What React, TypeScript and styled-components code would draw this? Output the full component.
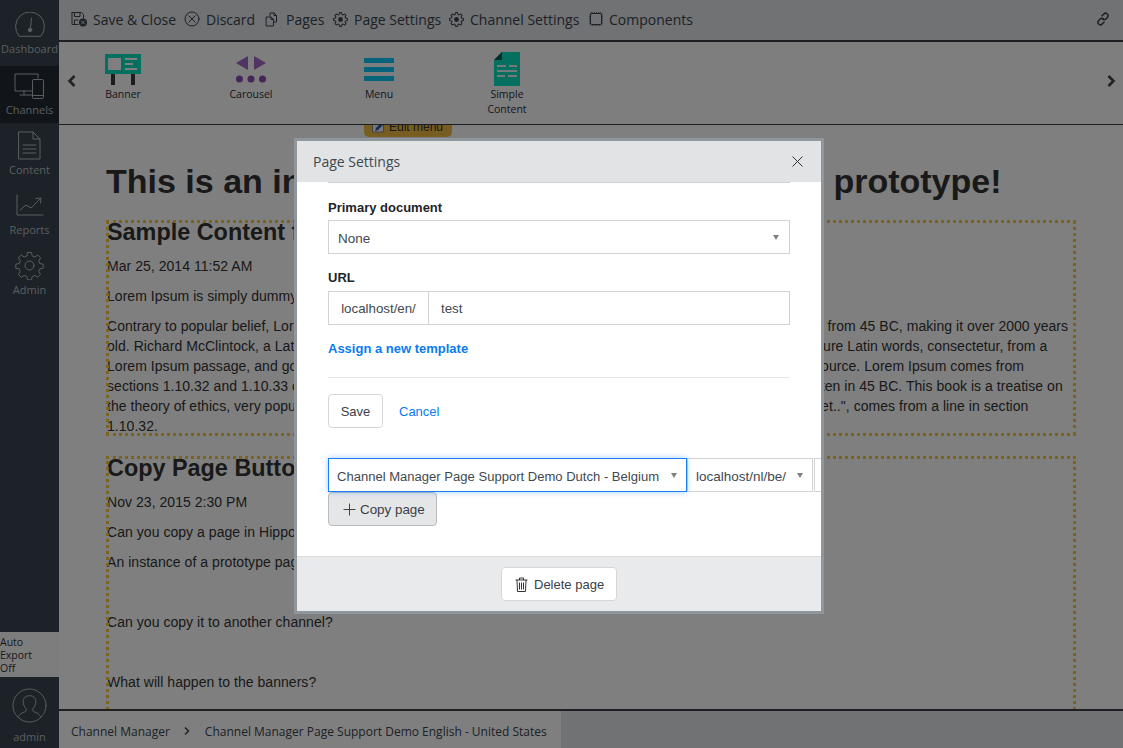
import React from "react";
import styled, { createGlobalStyle } from "styled-components";

const Global = createGlobalStyle`
  html, body { margin: 0; padding: 0; height: 100%; overflow: hidden; background: #fff; }
  body { font-family: "Liberation Sans", Arial, sans-serif; font-size: 14px; color: #333; }
  * { box-sizing: border-box; }
`;

const Shell = styled.div`
  display: flex;
  width: 1123px;
  height: 748px;
  overflow: hidden;
`;

const Sidebar = styled.nav`
  width: 59px;
  flex: none;
  background: #38454e;
  display: flex;
  flex-direction: column;
  font-family: "Open Sans", sans-serif;
  font-size: 11px;
  color: #b4bcc2;
`;

const NavItem = styled.div<{ $active?: boolean; $h: number; $top: number; $bottom: number }>`
  height: ${(p) => p.$h}px;
  flex: none;
  background: ${(p) => (p.$active ? "#222b35" : "transparent")};
  display: flex;
  flex-direction: column;
  align-items: center;
  padding: ${(p) => p.$top}px 0 ${(p) => p.$bottom}px;
  line-height: 15px;
`;

const NavIcon = styled.div`
  flex: 1;
  min-height: 0;
  display: flex;
  align-items: center;
  justify-content: center;
`;

const Spacer = styled.div`
  flex: 1;
`;

const AutoExport = styled.div`
  height: 45px;
  flex: none;
  background: #fafafa;
  color: #333;
  line-height: 13px;
  padding-top: 4px;
  font-size: 10.5px;
`;

const UserBox = styled.div`
  height: 71px;
  flex: none;
  display: flex;
  flex-direction: column;
  align-items: center;
  padding-top: 11px;
  gap: 6px;
  font-size: 11px;
  line-height: 16px;
`;

const Main = styled.div`
  flex: 1;
  min-width: 0;
  display: flex;
  flex-direction: column;
`;

const Toolbar = styled.div`
  height: 42px;
  flex: none;
  background: #e1e4e8;
  border-bottom: 2px solid #3a3f45;
  display: flex;
  align-items: center;
  padding: 0 12px 2px;
  font-family: "Open Sans", sans-serif;
  font-size: 14px;
  color: #39434c;
`;

const ToolItem = styled.span<{ $w: number }>`
  display: inline-flex;
  align-items: center;
  gap: 6px;
  width: ${(p) => p.$w}px;
  flex: none;
  white-space: nowrap;
  svg { flex: none; }
`;

const LinkIcon = styled.span`
  margin-left: auto;
  margin-right: 1px;
  display: flex;
`;

const Palette = styled.div`
  height: 83px;
  flex: none;
  background: #fcfcfc;
  border-bottom: 1px solid #3a3f45;
  display: flex;
  align-items: flex-start;
  position: relative;
  z-index: 2;
  color: #2e2e3a;
`;

const Chevron = styled.div<{ $side: "l" | "r" }>`
  width: 24px;
  height: 100%;
  flex: none;
  display: flex;
  align-items: center;
  justify-content: center;
  padding-bottom: 4px;
  margin-${(p) => (p.$side === "l" ? "right" : "left")}: -24px;
`;

const PaletteList = styled.div`
  flex: 1;
  display: flex;
`;

const PaletteItem = styled.div`
  width: 128px;
  flex: none;
  height: 67px;
  margin-top: 11px;
  display: flex;
  flex-direction: column;
  align-items: center;
  font-family: "Open Sans", sans-serif;
  font-size: 10.5px;
  line-height: 15px;
  text-align: center;
`;

const PaletteIcon = styled.div`
  height: 32px;
  margin-bottom: 2px;
  display: flex;
  align-items: center;
  justify-content: center;
`;

const PaletteLabel = styled.div`
  width: 60px;
`;

const Content = styled.main`
  flex: 1;
  min-height: 0;
  overflow: hidden;
  padding: 36px 47px 0;
  background: #fff;
  position: relative;
`;

const EditMenu = styled.div`
  position: absolute;
  left: 305px;
  top: -8px;
  width: 88px;
  height: 20px;
  background: #eebb45;
  border-radius: 0 0 5px 5px;
  color: #333;
  font-size: 12px;
  line-height: 17px;
  padding: 2px 0 0 8px;
  display: flex;
  gap: 3px;
  align-items: flex-start;
`;

const PageTitle = styled.h1`
  margin: 0 0 19px;
  font-size: 34px;
  line-height: 40px;
  font-weight: 700;
  white-space: nowrap;
  color: #333;
`;

const Block = styled.section`
  width: 970px;
  outline: 3px dotted #f7c83e;
  outline-offset: -3px;
  margin-bottom: 22px;
  padding-left: 1px;
  letter-spacing: 0.045px;
`;

const BlockTitle = styled.h2`
  margin: 0 0 12px;
  font-size: 23.4px;
  line-height: 24px;
  font-weight: 700;
  letter-spacing: 0;
`;

const Para = styled.p<{ $tight?: boolean }>`
  margin: 0 0 ${(p) => (p.$tight ? "-2px" : "10px")};
  line-height: 20px;
  min-height: 20px;
`;

const Footer = styled.footer`
  height: 39px;
  flex: none;
  background: #e1e4e8;
  border-top: 2px solid #3a3f45;
  display: flex;
  font-family: "Open Sans", sans-serif;
  font-size: 12px;
  color: #39434c;
`;

const Crumbs = styled.div`
  width: 502px;
  background: #fff;
  display: flex;
  align-items: center;
  padding: 3px 0 0 12px;
  gap: 14.5px;
  white-space: nowrap;
`;

const Overlay = styled.div`
  position: fixed;
  inset: 0;
  z-index: 10;
  background: rgba(0, 0, 0, 0.5);
  padding: 138px 0 0 294px;
`;

const Modal = styled.div`
  width: 530px;
  height: 476px;
  background: #fff;
  border: 3px solid #8f979c;
  display: flex;
  flex-direction: column;
  color: #212529;
`;

const ModalHeader = styled.div`
  height: 41px;
  flex: none;
  background: #e1e3e5;
  display: flex;
  align-items: center;
  justify-content: space-between;
  padding: 0 18px 0 16px;
  font-family: "Open Sans", sans-serif;
  font-size: 14px;
  color: #3e4850;
  position: relative;
  z-index: 1;
`;

const CloseBtn = styled.span`
  display: flex;
`;

const ModalBody = styled.div`
  flex: 1;
  min-height: 0;
  overflow: hidden;
  padding: 0 31px;
`;

const ClippedField = styled.div`
  height: 34px;
  margin-top: -33px;
  margin-bottom: 14px;
  border: 1px solid #d2d2d2;
`;

const Group = styled.div`
  margin-bottom: 13px;
`;

const Label = styled.label`
  display: block;
  font-size: 13px;
  font-weight: 700;
  line-height: 21px;
  margin-bottom: 2px;
`;

const UrlLabel = styled(Label)`
  margin-bottom: 3px;
`;

const SelectBox = styled.div<{ $w?: number; $focus?: boolean }>`
  height: 34px;
  width: ${(p) => (p.$w ? `${p.$w}px` : "100%")};
  flex: none;
  border: 1px solid ${(p) => (p.$focus ? "#1a7ff0" : "#d2d2d2")};
  box-shadow: ${(p) => (p.$focus ? "0 0 6px rgba(0,123,255,.35)" : "none")};
  position: relative;
  z-index: ${(p) => (p.$focus ? 1 : 0)};
  display: flex;
  align-items: center;
  justify-content: space-between;
  padding: 2px ${(p) => (p.$w ? "9px" : "10px")} 0 ${(p) => (p.$w ? "8px" : "9px")};
  font-size: ${(p) => (p.$focus ? "13.05px" : "13.5px")};
  background: #fff;
  color: #42494f;
  white-space: nowrap;
`;

const Caret = styled.i`
  width: 0;
  height: 0;
  border-left: 3.5px solid transparent;
  border-right: 3.5px solid transparent;
  border-top: 5px solid #808080;
  flex: none;
  margin-top: -2px;
`;

const InputGroup = styled.div`
  display: flex;
  height: 34px;
  font-size: 13.3px;
`;

const Addon = styled.div`
  width: 101px;
  flex: none;
  border: 1px solid #d2d2d2;
  display: flex;
  align-items: center;
  justify-content: center;
  color: #42494f;
`;

const TextInput = styled.div`
  flex: 1;
  border: 1px solid #d2d2d2;
  border-left: 0;
  display: flex;
  align-items: center;
  padding-left: 12px;
  color: #42494f;
`;

const BoldLink = styled.a`
  display: block;
  margin-bottom: 18px;
  font-size: 13px;
  font-weight: 700;
  line-height: 21px;
  color: #0a7bf0;
`;

const Rule = styled.hr`
  border: 0;
  height: 1px;
  background: #e6e6e6;
  margin: 0 0 16px;
`;

const Actions = styled.div`
  display: flex;
  align-items: center;
  gap: 16px;
  margin-bottom: 30px;
`;

const Button = styled.button<{ $pressed?: boolean }>`
  height: 34px;
  padding: 0 12px;
  border: 1px solid ${(p) => (p.$pressed ? "#b9bcbf" : "#d4d6d8")};
  border-radius: 4px;
  background: ${(p) => (p.$pressed ? "#e5e6e8" : "#fff")};
  color: #3a4046;
  font-family: "Liberation Sans", sans-serif;
  font-size: 13px;
  display: inline-flex;
  align-items: center;
  gap: 5px;
`;

const SaveButton = styled(Button)`
  width: 55px;
  justify-content: center;
  padding: 0;
`;

const CopyButton = styled(Button)`
  width: 109px;
  padding: 0 0 0 14px;
  gap: 4px;
  font-size: 13.4px;
`;

const TextLink = styled.a`
  color: #0a7bf0;
  font-size: 13px;
`;

const CopyRow = styled.div`
  display: flex;
  width: 520px;
`;

const CutOff = styled.div`
  width: 60px;
  height: 34px;
  flex: none;
  margin-left: 1px;
  border: 1px solid #d2d2d2;
`;

const ModalFooter = styled.div`
  height: 55px;
  flex: none;
  background: #e9eaec;
  border-top: 1px solid #dcdcdc;
  display: flex;
  align-items: center;
  justify-content: center;
`;

const DeleteButton = styled(Button)`
  width: 116px;
  padding: 0 0 0 13px;
  gap: 6px;
`;

const line = { fill: "none", stroke: "currentColor", strokeWidth: 1, strokeLinecap: "round" as const, strokeLinejoin: "round" as const };

function gearPath(cx: number, cy: number, r1: number, r2: number, n: number) {
  const pts: string[] = [];
  for (let i = 0; i < n; i++) {
    const a = (i / n) * Math.PI * 2;
    const w = (Math.PI / n) * 0.55;
    [[a - w * 1.3, r1], [a - w * 0.6, r2], [a + w * 0.6, r2], [a + w * 1.3, r1]].forEach(([t, r]) => {
      pts.push(`${(cx + Math.cos(t) * r).toFixed(2)} ${(cy + Math.sin(t) * r).toFixed(2)}`);
    });
  }
  return "M" + pts.join("L") + "Z";
}

const Gear = ({ s = 15 }: { s?: number }) => (
  <svg width={s} height={s} viewBox="0 0 16 16" {...line} strokeWidth={1.1}>
    <path d={gearPath(8, 8, 5.6, 7.4, 8)} />
    <circle cx="8" cy="8" r="2" fill="currentColor" />
  </svg>
);

const SaveIcon = () => (
  <svg width="16" height="16" viewBox="0 0 16 16" {...line}>
    <path d="M1 1.5h9.5l2 2V7M1 1.5V13.5H7" />
    <path d="M3.5 1.5V5.5H9V1.5M3.5 13.5V9H7" />
    <circle cx="12" cy="11.5" r="4" fill="currentColor" stroke="none" />
    <path d="M10.5 10l3 3M13.5 10l-3 3" stroke="#e1e4e8" />
  </svg>
);

const DiscardIcon = () => (
  <svg width="16" height="16" viewBox="0 0 16 16" {...line}>
    <circle cx="8" cy="8" r="7" />
    <path d="M4.8 4.8l6.4 6.4M11.2 4.8l-6.4 6.4" />
  </svg>
);

const PagesIcon = () => (
  <svg width="15" height="15" viewBox="0 0 15 15" {...line}>
    <path d="M5 3.500V1h4l2.500 2.500v6.500H9" />
    <path d="M1.500 5h4.500l2.500 2.500V14h-7z" />
    <path d="M9 1v2.500h2.500M6 5v2.500h2.500" />
  </svg>
);

const ComponentsIcon = () => (
  <svg width="14" height="14" viewBox="0 0 14 14" fill="none" stroke="currentColor">
    <rect x="1.5" y="1.5" width="11" height="11" rx="1.5" strokeWidth="1" />
    <rect x="0.5" y="0.5" width="13" height="13" rx="2" strokeWidth="0.8" strokeDasharray="1 1.2" />
  </svg>
);

const LinkGlyph = () => (
  <svg width="14" height="14" viewBox="0 0 14 14" fill="none" stroke="#39434c" strokeWidth="1.5" strokeLinecap="round">
    <path d="M6 3.800l1.600-1.600a2.400 2.400 0 0 1 3.900 3l-1.700 1.800a2.400 2.400 0 0 1-3.300 0" />
    <path d="M8 10.200l-1.600 1.600a2.400 2.400 0 0 1-3.900-3l1.700-1.800a2.400 2.400 0 0 1 3.300 0" />
  </svg>
);

const ChevronIcon = ({ dir }: { dir: "l" | "r" }) => (
  <svg width="9" height="12" viewBox="0 0 9 12" fill="none" stroke="#444" strokeWidth="2.6">
    <path d={dir === "l" ? "M7.500 1L2.500 6l5 5" : "M1.500 1l5 5-5 5"} />
  </svg>
);

const BannerIcon = () => (
  <svg width="36" height="31" viewBox="0 0 36 31">
    <rect x="0" y="0" width="36" height="20" fill="#0ce0c0" />
    <rect x="6" y="20" width="4" height="11" fill="#3a3a3a" />
    <rect x="26" y="20" width="4" height="11" fill="#3a3a3a" />
    <rect x="3" y="4" width="13" height="12" fill="#fff" />
    <rect x="20" y="4" width="12" height="2" fill="#fff" />
    <rect x="20" y="9" width="8" height="2" fill="#fff" />
    <rect x="20" y="14" width="12" height="2" fill="#fff" />
  </svg>
);

const CarouselIcon = () => (
  <svg width="30" height="27" viewBox="0 0 30 27">
    <path d="M12 0v14L0 7zM18 0v14l12-7z" fill="#a468c8" />
    <circle cx="3.500" cy="23" r="3.500" fill="#8a4cb0" />
    <circle cx="15" cy="23" r="3.500" fill="#8a4cb0" />
    <circle cx="26.500" cy="23" r="3.500" fill="#8a4cb0" />
  </svg>
);

const MenuIcon = () => (
  <svg width="30" height="23" viewBox="0 0 30 23" fill="#0ac8f8">
    <rect y="0" width="30" height="5" />
    <rect y="9" width="30" height="5" />
    <rect y="18" width="30" height="5" />
  </svg>
);

const DocIcon = () => (
  <svg width="26" height="34" viewBox="0 0 26 34">
    <path d="M8 0h18v34H0V8z" fill="#0ce0c0" />
    <path d="M8 0v8H0z" fill="#0a5a50" />
    <path d="M3 13h9v2H3zM15 13h8v2h-8zM3 18h20v2H3zM3 23h8v2H3zM14 23h9v2h-9z" fill="#e6f8f4" />
  </svg>
);

const DashIcon = () => (
  <svg width="30" height="25" viewBox="0 0 30 25" {...line}>
    <path d="M4 24A14.500 14.500 0 1 1 26 24Z" />
    <path d="M16.500 6l-1 10" />
    <circle cx="15" cy="18" r="1.800" fill="currentColor" />
  </svg>
);

const ChannelsIcon = () => (
  <svg width="31" height="27" viewBox="0 0 31 27" {...line}>
    <path d="M24 5V1H1v17h17M10 18v4M6 22h12" />
    <rect x="18.500" y="6.500" width="11" height="19" rx="1" />
    <path d="M19 22.500h10" />
  </svg>
);

const ContentIcon = () => (
  <svg width="23" height="29" viewBox="0 0 23 29" {...line}>
    <path d="M1 1h14l7 7v20H1zM15 1v7h7" />
    <path d="M5 14h13M5 18h13M5 22h13" />
  </svg>
);

const ReportsIcon = () => (
  <svg width="28" height="22" viewBox="0 0 28 22" {...line}>
    <path d="M1 1v20h26" />
    <path d="M4 16l6-5 5 3 9-9M20 4.500l5-.5-.5 5" />
  </svg>
);

const AdminIcon = () => (
  <svg width="29" height="29" viewBox="0 0 29 29" {...line}>
    <path d="M12.500 1.500h4l.7 3.400 2.600 1.100 3-1.900 2.800 2.800-1.900 3 1.100 2.600 3.400.7v4l-3.400.7-1.100 2.600 1.900 3-2.800 2.800-3-1.900-2.600 1.100-.7 3.400h-4l-.7-3.400-2.600-1.100-3 1.900-2.800-2.800 1.900-3-1.100-2.600-3.400-.7v-4l3.400-.7 1.100-2.600-1.900-3 2.800-2.800 3 1.900 2.600-1.100z" />
    <circle cx="14.500" cy="14.500" r="4.500" />
  </svg>
);

const AvatarIcon = () => (
  <svg width="35" height="35" viewBox="0 0 36 36" {...line}>
    <circle cx="18" cy="18" r="17" />
    <path d="M6.500 30.500c1-4 4-5 7-6 1.500-.6 1.500-2.500.7-3.600-1.700-2-2.700-4.400-2.700-7 0-3.500 2.500-6 6.500-6s6.500 2.500 6.500 6c0 2.600-1 5-2.700 7-.8 1.100-.8 3 .7 3.600 3 1 6 2 7 6" />
  </svg>
);

const CloseIcon = () => (
  <svg width="11" height="11" viewBox="0 0 11 11" stroke="#333" strokeWidth="1" fill="none">
    <path d="M.5.5l10 10M10.500.5l-10 10" />
  </svg>
);

const PlusIcon = () => (
  <svg width="13" height="13" viewBox="0 0 13 13" stroke="#444" strokeWidth="1" fill="none">
    <path d="M6.500.5v12M.5 6.500h12" />
  </svg>
);

const TrashIcon = () => (
  <svg width="13" height="15" viewBox="0 0 13 15" fill="none" stroke="#333" strokeWidth="1">
    <path d="M.5 3h12M4.500 3V1h4v2M2 3l.5 11.500h8L11 3M4.500 5.500v7M6.500 5.500v7M8.500 5.500v7" />
  </svg>
);

const PencilBadge = () => (
  <svg width="14" height="14" viewBox="0 0 14 14">
    <rect x="0.5" y="2" width="11" height="11" fill="#eef" stroke="#888" />
    <path d="M4 9l7-7 2 2-7 7-3 1z" fill="#2c5aa0" />
  </svg>
);

const lorem = `Contrary to popular belief, Lorem Ipsum is not simply random text. It has roots in a piece of classical Latin literature from 45 BC, making it over 2000 years old. Richard McClintock, a Latin professor at Hampden-Sydney College in Virginia, looked up one of the more obscure Latin words, consectetur, from a Lorem Ipsum passage, and going through the cites of the word in classical literature, discovered the undoubtable source. Lorem Ipsum comes from sections 1.10.32 and 1.10.33 of "de Finibus Bonorum et Malorum" (The Extremes of Good and Evil) by Cicero, written in 45 BC. This book is a treatise on the theory of ethics, very popular during the Renaissance. The first line of Lorem Ipsum, "Lorem ipsum dolor sit amet..", comes from a line in section 1.10.32.`;

export default function App() {
  return (
    <>
      <Global />
      <Shell>
        <Sidebar>
          <NavItem $h={66} $top={8} $bottom={10}><NavIcon><DashIcon /></NavIcon>Dashboard</NavItem>
          <NavItem $h={57} $top={4} $bottom={6} $active><NavIcon><ChannelsIcon /></NavIcon>Channels</NavItem>
          <NavItem $h={60} $top={5} $bottom={6}><NavIcon><ContentIcon /></NavIcon>Content</NavItem>
          <NavItem $h={60} $top={5} $bottom={6}><NavIcon><ReportsIcon /></NavIcon>Reports</NavItem>
          <NavItem $h={60} $top={5} $bottom={6}><NavIcon><AdminIcon /></NavIcon>Admin</NavItem>
          <Spacer />
          <AutoExport>Auto<br />Export<br />Off</AutoExport>
          <UserBox><AvatarIcon />admin</UserBox>
        </Sidebar>
        <Main>
          <Toolbar>
            <ToolItem $w={113}><SaveIcon />Save &amp; Close</ToolItem>
            <ToolItem $w={81}><DiscardIcon />Discard</ToolItem>
            <ToolItem $w={68}><PagesIcon />Pages</ToolItem>
            <ToolItem $w={116}><Gear />Page Settings</ToolItem>
            <ToolItem $w={140}><Gear />Channel Settings</ToolItem>
            <ToolItem $w={110}><ComponentsIcon />Components</ToolItem>
            <LinkIcon><LinkGlyph /></LinkIcon>
          </Toolbar>
          <Palette>
            <Chevron $side="l"><ChevronIcon dir="l" /></Chevron>
            <PaletteList>
              <PaletteItem><PaletteIcon><BannerIcon /></PaletteIcon><PaletteLabel>Banner</PaletteLabel></PaletteItem>
              <PaletteItem><PaletteIcon><CarouselIcon /></PaletteIcon><PaletteLabel>Carousel</PaletteLabel></PaletteItem>
              <PaletteItem><PaletteIcon><MenuIcon /></PaletteIcon><PaletteLabel>Menu</PaletteLabel></PaletteItem>
              <PaletteItem><PaletteIcon><DocIcon /></PaletteIcon><PaletteLabel>Simple Content</PaletteLabel></PaletteItem>
            </PaletteList>
            <Chevron $side="r"><ChevronIcon dir="r" /></Chevron>
          </Palette>
          <Content>
            <EditMenu><PencilBadge />Edit menu</EditMenu>
            <PageTitle>This is an interactive Channel Manager page prototype!</PageTitle>
            <Block>
              <BlockTitle>Sample Content for the page</BlockTitle>
              <Para>Mar 25, 2014 11:52 AM</Para>
              <Para>Lorem Ipsum is simply dummy text of the printing and typesetting industry.</Para>
              <Para $tight>{lorem}</Para>
            </Block>
            <Block>
              <BlockTitle>Copy Page Button</BlockTitle>
              <Para>Nov 23, 2015 2:30 PM</Para>
              <Para>Can you copy a page in Hippo?</Para>
              <Para>An instance of a prototype page</Para>
              <Para />
              <Para>Can you copy it to another channel?</Para>
              <Para />
              <Para>What will happen to the banners?</Para>
              <Para />
            </Block>
          </Content>
          <Footer>
            <Crumbs>
              <span>Channel Manager</span>
              <svg width="6" height="8" viewBox="0 0 6 8" fill="none" stroke="#39434c" strokeWidth="1.5"><path d="M1 .5L4.500 4 1 7.500" /></svg>
              <span>Channel Manager Page Support Demo English - United States</span>
            </Crumbs>
          </Footer>
        </Main>
      </Shell>
      <Overlay>
        <Modal>
          <ModalHeader>
            Page Settings
            <CloseBtn><CloseIcon /></CloseBtn>
          </ModalHeader>
          <ModalBody>
            <ClippedField />
            <Group>
              <Label>Primary document</Label>
              <SelectBox>None<Caret /></SelectBox>
            </Group>
            <Group>
              <UrlLabel>URL</UrlLabel>
              <InputGroup>
                <Addon>localhost/en/</Addon>
                <TextInput>test</TextInput>
              </InputGroup>
            </Group>
            <BoldLink>Assign a new template</BoldLink>
            <Rule />
            <Actions>
              <SaveButton>Save</SaveButton>
              <TextLink>Cancel</TextLink>
            </Actions>
            <CopyRow>
              <SelectBox $w={359} $focus>Channel Manager Page Support Demo Dutch - Belgium<Caret /></SelectBox>
              <SelectBox $w={126}>localhost/nl/be/<Caret /></SelectBox>
              <CutOff />
            </CopyRow>
            <CopyButton $pressed><PlusIcon />Copy page</CopyButton>
          </ModalBody>
          <ModalFooter>
            <DeleteButton><TrashIcon />Delete page</DeleteButton>
          </ModalFooter>
        </Modal>
      </Overlay>
    </>
  );
}
